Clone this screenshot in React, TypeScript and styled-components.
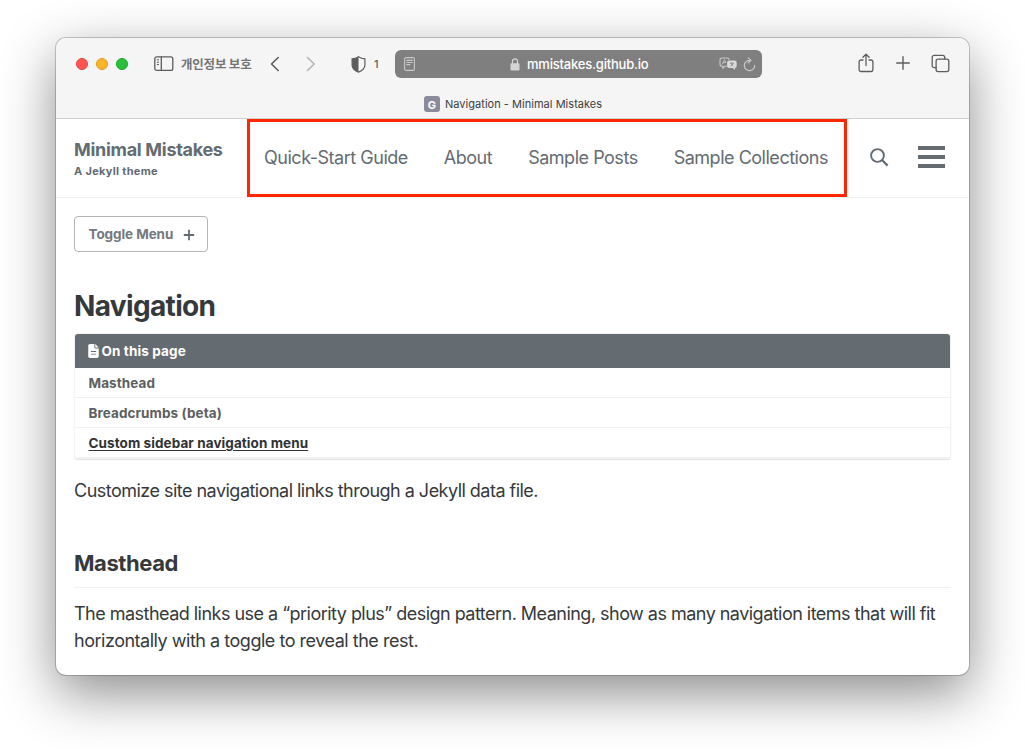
import React from "react";
import styled, { createGlobalStyle } from "styled-components";

const GlobalStyle = createGlobalStyle`
  *, *::before, *::after { box-sizing: border-box; }
  html, body { margin: 0; padding: 0; background: #fff; }
  body {
    font-family: Inter, "Noto Sans CJK KR", "Liberation Sans", sans-serif;
    color: #36393c;
    overflow: hidden;
  }
  h1, h2, p, ul { margin: 0; padding: 0; }
  ul { list-style: none; }
  a { color: inherit; text-decoration: none; }
  svg { display: block; flex: none; }
`;

const Desktop = styled.div`
  width: 1025px;
  height: 749px;
  padding: 38px 56px 74px;
  overflow: hidden;
`;

const BrowserWindow = styled.div`
  display: flex;
  flex-direction: column;
  width: 913px;
  height: 637px;
  border-radius: 10px;
  overflow: hidden;
  background: #fff;
  box-shadow: 0 0 0 1px rgba(0, 0, 0, 0.2), 0 18px 54px rgba(0, 0, 0, 0.46);
`;

const Chrome = styled.header`
  height: 81px;
  flex: none;
  background: #f5f5f5;
  border-bottom: 1px solid #cfcfcf;
`;

const Toolbar = styled.div`
  display: flex;
  align-items: center;
  height: 52px;
  padding: 0 19px 0 20px;
  color: #5d5d5d;
`;

const TrafficLights = styled.div`
  display: flex;
  gap: 8px;
  margin-right: 26px;
`;

const Light = styled.span<{ $fill: string; $edge: string }>`
  width: 12px;
  height: 12px;
  border-radius: 50%;
  background: ${(p) => p.$fill};
  border: 1px solid ${(p) => p.$edge};
`;

const PrivateLabel = styled.span`
  width: 71px;
  margin: 0 18px 2px 7px;
  font: 700 12.5px "Noto Sans CJK KR", sans-serif;
  letter-spacing: -0.2px;
  white-space: nowrap;
  color: #747474;
`;

const BackForward = styled.div`
  display: flex;
  gap: 26px;
  margin-right: 35px;
`;

const BlockCount = styled.span`
  width: 8px;
  margin: 0 13px 0 8px;
  font-size: 11px;
  font-weight: 500;
`;

const AddressBar = styled.div`
  display: flex;
  align-items: center;
  width: 367px;
  height: 28px;
  padding: 0 6px 0 9px;
  border-radius: 6px;
  background: #7f7f7f;
  color: #c9c9c9;
`;

const Host = styled.div`
  display: flex;
  flex: 1;
  align-items: center;
  gap: 7px;
  padding-left: 95px;
  font-size: 13px;
  font-weight: 500;
  letter-spacing: -0.2px;
  color: #fff;
`;

const AddressTools = styled.div`
  display: flex;
  align-items: center;
  gap: 5px;
`;

const WindowTools = styled.div`
  display: flex;
  align-items: center;
  gap: 20.5px;
  margin: 0 0 2px auto;
`;

const TabTitle = styled.div`
  display: flex;
  align-items: center;
  gap: 5px;
  height: 28px;
  padding-left: 368px;
  font-size: 11px;
  letter-spacing: 0.03px;
  color: #404040;
`;

const Favicon = styled.span`
  display: grid;
  place-items: center;
  width: 16px;
  height: 16px;
  padding-top: 1px;
  border-radius: 3px;
  background: #8b8b9b;
  color: #fff;
  font-size: 11px;
  font-weight: 700;
`;

const Masthead = styled.div`
  display: flex;
  align-items: flex-start;
  height: 79px;
  flex: none;
  padding: 0 24px 0 18px;
  border-bottom: 1px solid #f0f0f1;
  color: #646c72;
`;

const SiteTitle = styled.a`
  width: 173px;
  padding-top: 19px;
  font-size: 18px;
  line-height: 24px;
  font-weight: 700;
  letter-spacing: -0.3px;
  white-space: nowrap;
`;

const Subtitle = styled.span`
  display: block;
  font-size: 11px;
  line-height: 19px;
  letter-spacing: 0.31px;
`;

const SiteNav = styled.nav`
  display: flex;
  align-items: center;
  justify-content: space-between;
  width: 600px;
  height: 78px;
  padding: 0 16px 1px 14px;
  border: 3px solid #ff2600;
`;

const NavLink = styled.a`
  font-size: 18px;
  letter-spacing: -0.48px;
  white-space: nowrap;
`;

const MastheadActions = styled.div`
  display: flex;
  flex: 1;
  align-items: center;
  justify-content: space-between;
  height: 76px;
  padding-left: 23px;
`;

const Burger = styled.span`
  width: 27px;
  height: 22px;
  border-top: 4px solid #646c72;
  border-bottom: 4px solid #646c72;
  background: linear-gradient(#646c72, #646c72) 0 5px / 100% 4px no-repeat;
`;

const Page = styled.main`
  padding: 18px 18px 0;
`;

const ToggleButton = styled.button`
  display: flex;
  align-items: center;
  justify-content: space-between;
  width: 134px;
  height: 36px;
  padding: 0 12px 0 13.5px;
  border: 1px solid #b2b6b9;
  border-radius: 4px;
  background: #fff;
  color: #73797e;
  font: 700 13.5px Inter, sans-serif;
  letter-spacing: -0.08px;

  svg { margin-top: 2px; }
`;

const PageTitle = styled.h1`
  margin-top: 37px;
  font-size: 28px;
  line-height: 34px;
  font-weight: 700;
  letter-spacing: -0.65px;
`;

const Toc = styled.nav`
  margin-top: 10px;
  border: 1px solid #f2f3f3;
  border-radius: 4px;
  overflow: hidden;
  box-shadow: 0 1px 1px rgba(0, 0, 0, 0.125);
`;

const TocHeader = styled.div`
  display: flex;
  align-items: center;
  gap: 2.5px;
  height: 34px;
  padding-left: 13px;
  background: #646c72;
  color: #fff;
  font-size: 13.5px;
  font-weight: 700;
  letter-spacing: 0.12px;
`;

const TocItem = styled.li`
  height: 30px;
  padding-left: 13.5px;
  border-bottom: 1px solid #f0f0f1;
  font-size: 13.5px;
  line-height: 30px;
`;

const TocLink = styled.a<{ $active?: boolean }>`
  font-weight: 700;
  letter-spacing: 0.08px;
  color: ${(p) => (p.$active ? "#2f3335" : "#5d5f61")};
  text-decoration: ${(p) => (p.$active ? "underline" : "none")};
  text-underline-offset: 2px;
`;

const Lead = styled.p`
  margin-top: 18px;
  font-size: 18px;
  line-height: 27px;
  letter-spacing: -0.52px;
`;

const SectionTitle = styled.h2`
  margin-top: 44px;
  padding-bottom: 9px;
  border-bottom: 1px solid #f0f0f1;
  font-size: 22px;
  line-height: 30px;
  font-weight: 700;
  letter-spacing: -0.42px;
`;

const Copy = styled.div`
  padding-top: 12px;
`;

const Body = styled.p<{ $tracking: number }>`
  font-size: 18px;
  line-height: 27px;
  letter-spacing: ${(p) => p.$tracking}px;
  white-space: nowrap;
`;

const line = { fill: "none", stroke: "currentColor", strokeLinecap: "round", strokeLinejoin: "round" } as const;

const SidebarIcon = () => (
  <svg width="20" height="16" viewBox="0 0 20 16" {...line} strokeWidth="1.3">
    <rect x=".8" y=".8" width="18" height="13.6" rx="2" />
    <path d="M7.3 .8v13.6" />
    <path d="M3.2 3.8h1.400M3.200 6.200h1.400M3.200 8.600h1.400" strokeWidth="1" />
  </svg>
);
const BackIcon = () => (
  <svg width="10" height="16" viewBox="0 0 10 16" {...line} strokeWidth="1.6"><path d="M8.2 1.5 1.5 8l6.7 6.5" /></svg>
);
const ForwardIcon = () => (
  <svg width="10" height="16" viewBox="0 0 10 16" {...line} stroke="#b4b4b4" strokeWidth="1.6"><path d="M1.5 1.5 8.2 8l-6.7 6.5" /></svg>
);
const ShieldIcon = () => (
  <svg width="15" height="17" viewBox="0 0 15 17">
    <path d="M7.500 .800C5.500 2.200 3.300 2.800 1.100 2.900v6.300c0 3.300 2.700 5.300 6.400 6.900 3.700-1.600 6.400-3.600 6.400-6.900V2.900C11.700 2.800 9.500 2.200 7.500 .800Z" fill="none" stroke="currentColor" strokeWidth="1.200" />
    <path d="M7.500 .800C5.500 2.200 3.300 2.800 1.100 2.900v6.300c0 3.300 2.700 5.300 6.400 6.900Z" fill="currentColor" />
  </svg>
);
const ReaderIcon = () => (
  <svg width="11" height="14" viewBox="0 0 11 14" {...line} strokeWidth="1.1">
    <rect x=".6" y=".6" width="9.800" height="12.800" rx="1.500" /><path d="M2.800 3.400h5.400M2.800 5.500h5.400M2.800 7.600h3" />
  </svg>
);
const LockIcon = () => (
  <svg width="10" height="13" viewBox="0 0 10 13">
    <rect x=".5" y="5.300" width="9" height="7.200" rx="1.200" fill="#d4d4d4" />
    <path d="M2.500 6V3.500a2.500 2.700 0 0 1 5 0V6" fill="none" stroke="#d4d4d4" strokeWidth="1.200" />
  </svg>
);
const TranslateIcon = () => (
  <svg width="19" height="14" viewBox="0 0 19 14">
    <path d="M8 9.200H6L3.800 11.300V9.200H3a2 2 0 0 1-2-2V3a2 2 0 0 1 2-2h5a2 2 0 0 1 2 1.500" {...line} strokeWidth="1.100" />
    <path d="m3.500 7 2-4.300 1.300 2.800M4.400 5.400h2" {...line} strokeWidth=".9" />
    <path d="M10.300 3.500h5.200a2.200 2.200 0 0 1 2.200 2.200v3.100a2.200 2.200 0 0 1-1.700 2.100v2L13.800 11h-3.500a2.200 2.200 0 0 1-2.200-2.200V5.700a2.200 2.200 0 0 1 2.200-2.200Z" fill="#dadada" />
    <path d="M12.900 4.900v1M10.900 6.300h4M11.500 9.100c1.300-.5 2.200-1.400 2.500-2.800M11.800 6.300c.4 1.400 1.300 2.300 2.500 2.800" fill="none" stroke="#7f7f7f" strokeWidth=".7" />
  </svg>
);
const ReloadIcon = () => (
  <svg width="13" height="15" viewBox="0 0 13 15" {...line} strokeWidth="1.200">
    <path d="M6.500 3.300a5.200 5.200 0 1 0 5.200 5.200M5.300.9l2.600 2.500-2.600 2.500" />
  </svg>
);
const ShareIcon = () => (
  <svg width="16" height="20" viewBox="0 0 16 20" {...line} strokeWidth="1.300">
    <path d="M5 7H3a1.900 1.900 0 0 0-1.900 1.900v7.700A1.900 1.900 0 0 0 3 18.500h10a1.900 1.900 0 0 0 1.900-1.900V8.900A1.900 1.900 0 0 0 13 7h-2M8 12.500V1.200M4.900 4.200 8 1.200l3.100 3" />
  </svg>
);
const PlusIcon = () => (
  <svg width="16" height="16" viewBox="0 0 16 16" {...line} strokeWidth="1.400"><path d="M8 1.700v12.600M1.700 8h12.600" /></svg>
);
const TabsIcon = () => (
  <svg width="19" height="19" viewBox="0 0 19 19" {...line} strokeWidth="1.300">
    <rect x="5.100" y="5.100" width="12.700" height="12.500" rx="2" />
    <path d="M5 13.700H3.200a2 2 0 0 1-2-2V3.300a2 2 0 0 1 2-2h8.500a2 2 0 0 1 2 2V5" />
  </svg>
);
const SearchIcon = () => (
  <svg width="19" height="19" viewBox="0 0 19 19" fill="none" stroke="#646c72">
    <circle cx="7.500" cy="7.500" r="6.400" strokeWidth="1.900" /><path d="m12 12 5.600 5.600" strokeWidth="2.200" />
  </svg>
);
const FileIcon = () => (
  <svg width="11" height="14" viewBox="0 0 384 512" fill="currentColor">
    <path fillRule="evenodd" d="M224 0H64C29 0 0 29 0 64v384c0 35 29 64 64 64h256c35 0 64-29 64-64V160H256c-18 0-32-14-32-32V0zM256 0v128h128L256 0zM96 256h192v36H96v-36zM96 352h192v36H96v-36z" />
  </svg>
);
const ToggleIcon = () => (
  <svg width="12" height="12" viewBox="0 0 12 12" stroke="#646c72" strokeWidth="1.800"><path d="M6 .8v10.400M.8 6h10.400" /></svg>
);

export default function App() {
  return (
    <>
      <GlobalStyle />
      <Desktop>
        <BrowserWindow>
          <Chrome>
            <Toolbar>
              <TrafficLights>
                <Light $fill="#ff5450" $edge="#e2443f" />
                <Light $fill="#fdb42b" $edge="#df9c20" />
                <Light $fill="#26c138" $edge="#1ca62b" />
              </TrafficLights>
              <SidebarIcon />
              <PrivateLabel>개인정보 보호</PrivateLabel>
              <BackForward>
                <BackIcon />
                <ForwardIcon />
              </BackForward>
              <ShieldIcon />
              <BlockCount>1</BlockCount>
              <AddressBar>
                <ReaderIcon />
                <Host>
                  <LockIcon />
                  <span>mmistakes.github.io</span>
                </Host>
                <AddressTools>
                  <TranslateIcon />
                  <ReloadIcon />
                </AddressTools>
              </AddressBar>
              <WindowTools>
                <ShareIcon />
                <PlusIcon />
                <TabsIcon />
              </WindowTools>
            </Toolbar>
            <TabTitle>
              <Favicon>G</Favicon>
              <span>Navigation - Minimal Mistakes</span>
            </TabTitle>
          </Chrome>
          <Masthead>
            <SiteTitle href="#">
              Minimal Mistakes
              <Subtitle>A Jekyll theme</Subtitle>
            </SiteTitle>
            <SiteNav>
              <NavLink href="#">Quick-Start Guide</NavLink>
              <NavLink href="#">About</NavLink>
              <NavLink href="#">Sample Posts</NavLink>
              <NavLink href="#">Sample Collections</NavLink>
            </SiteNav>
            <MastheadActions>
              <SearchIcon />
              <Burger />
            </MastheadActions>
          </Masthead>
          <Page>
            <ToggleButton>
              Toggle Menu
              <ToggleIcon />
            </ToggleButton>
            <PageTitle>Navigation</PageTitle>
            <Toc>
              <TocHeader>
                <FileIcon />
                On this page
              </TocHeader>
              <ul>
                <TocItem><TocLink href="#">Masthead</TocLink></TocItem>
                <TocItem><TocLink href="#">Breadcrumbs (beta)</TocLink></TocItem>
                <TocItem><TocLink href="#" $active>Custom sidebar navigation menu</TocLink></TocItem>
              </ul>
            </Toc>
            <Lead>Customize site navigational links through a Jekyll data file.</Lead>
            <SectionTitle>Masthead</SectionTitle>
            <Copy>
              <Body $tracking={-0.525}>The masthead links use a “priority plus” design pattern. Meaning, show as many navigation items that will fit</Body>
              <Body $tracking={-0.48}>horizontally with a toggle to reveal the rest.</Body>
            </Copy>
          </Page>
        </BrowserWindow>
      </Desktop>
    </>
  );
}
